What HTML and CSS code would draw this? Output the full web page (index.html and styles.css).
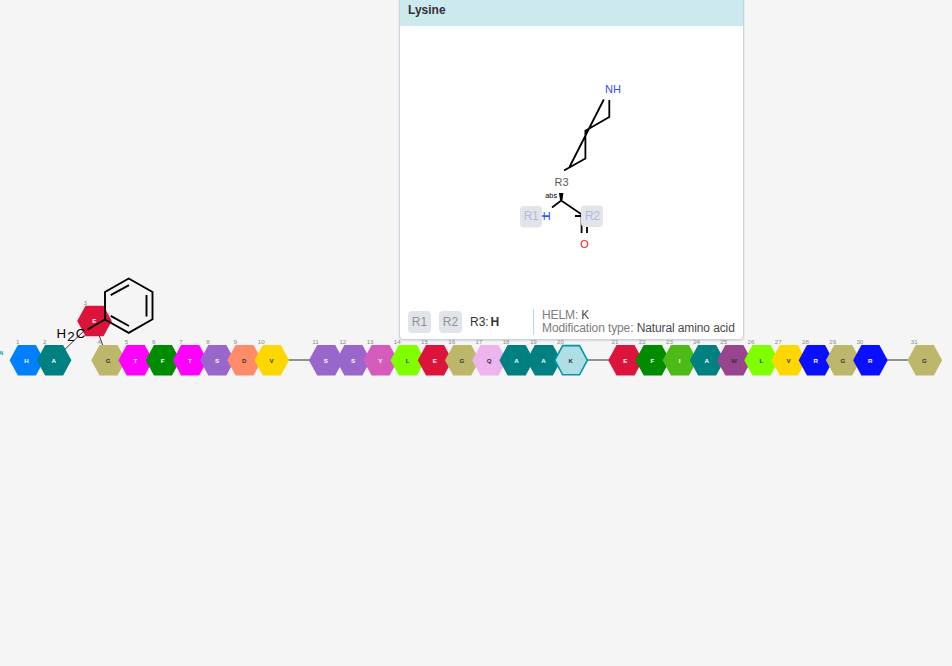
FILE: index.html
```html
<!DOCTYPE html>
<html lang="en">
<head>
<meta charset="utf-8">
<title>Sequence editor</title>
<link rel="stylesheet" href="styles.css">
</head>
<body>
<main class="editor">
  <svg class="canvas" width="952" height="666" viewBox="0 0 952 666">
    <text class="terminus" x="-0.700" y="355.300">N</text>
    <path class="bond" d="M288 360h24M587 360h24M886 360h24"/>
    <path class="bond thin" d="M54 360L94 321L108 360"/>
    <g id="monomers"></g>
    <g class="structure">
      <path d="M105 319.500V292L128.700 278.500L152.500 292V319.200L128.700 332.800L105 319.500L87.500 329.500M110.700 295.200L129 285.200M146.500 295V316.500M110.700 315.800L129 326"/>
      <text x="56.500" y="338.300">H</text>
      <text x="67.300" y="341.300">2</text>
      <text x="75.700" y="338.300">C</text>
    </g>
  </svg>
  <section class="card">
    <h1 class="card-title">Lysine</h1>
    <svg class="molecule" width="343" height="280" viewBox="400 26 343 280">
      <path class="atom-bond" d="M609.300 100V117L585.400 130.700V158.500L564 170.500M603.800 99.500L569.500 167M552 207.500L561.200 200.500L584 216M575 216H584M581.600 217V233M587 217V233"/>
      <path class="wedge" d="M559 193h4.400l-1 7.500h-2.300z"/>
      <text class="nitrogen" x="605" y="93">NH</text>
      <text class="group" x="554.500" y="186">R3</text>
      <text class="stereo" x="545.300" y="198">abs</text>
      <text class="nitrogen" x="542.800" y="220">H</text>
      <path class="nh-bond" d="M540 216h9"/>
      <text class="oxygen" x="580.200" y="248">O</text>
      <rect class="tag" x="520" y="206" width="22" height="21.500" rx="4"/>
      <rect class="tag" x="581" y="205.500" width="22" height="21.500" rx="4"/>
      <text class="tag-text" x="523.700" y="220">R1</text>
      <text class="tag-text" x="585" y="220">R2</text>
    </svg>
    <footer class="card-footer">
      <div class="groups">
        <span class="chip">R1</span>
        <span class="chip">R2</span>
        <span class="leaving">R3: <b>H</b></span>
      </div>
      <div class="facts">
        <div>HELM: <span>K</span></div>
        <div>Modification type: <span>Natural amino acid</span></div>
      </div>
    </footer>
  </section>
</main>
<script src="script.js"></script>
</body>
</html>
```
FILE: styles.css
```css
body {
  margin: 0;
  font-family: "Liberation Sans", Arial, sans-serif;
}

.editor {
  position: relative;
  width: 952px;
  height: 666px;
  overflow: hidden;
  background: #f5f5f5;
}

.canvas,
.molecule {
  display: block;
}

.terminus {
  font-size: 5.5px;
  font-weight: bold;
  fill: #22a0ad;
}

.bond {
  fill: none;
  stroke: #707070;
  stroke-width: 1.3;
}

.thin {
  stroke: #333;
  stroke-width: 1;
}

.letter {
  font-size: 6.2px;
  font-weight: bold;
  text-anchor: middle;
}

.number {
  font-size: 6.2px;
  fill: #8c8c8c;
}

.selected {
  stroke: #0097a8;
  stroke-width: 1.6;
}

.structure path {
  fill: none;
  stroke: #000;
  stroke-width: 1.9;
}

.structure text {
  font-size: 13.3px;
}

.card {
  position: absolute;
  top: -6px;
  left: 399px;
  box-sizing: border-box;
  width: 345px;
  height: 346px;
  overflow: hidden;
  border: 1px solid #cad3dd;
  border-radius: 4px;
  background: #fff;
  box-shadow: 0 1px 2px #67688433;
}

.card-title {
  height: 31px;
  margin: 0;
  padding-left: 8px;
  background: #cceaee;
  color: #333;
  font-size: 12px;
  line-height: 30px;
}

.atom-bond {
  fill: none;
  stroke: #000;
  stroke-width: 1.8;
}

.molecule text {
  font-size: 11px;
}

.nitrogen {
  fill: #304ff7;
}

.nh-bond {
  stroke: #304ff7;
  stroke-width: 1.5;
}

.oxygen {
  fill: #ff0d0d;
}

.group {
  fill: #585858;
}

.molecule .stereo {
  font-size: 7.3px;
}

.tag {
  fill: #e1e5ea;
}

.molecule .tag-text {
  font-size: 12px;
  letter-spacing: -0.3px;
  fill: #b4b8dc;
}

.card-footer {
  display: flex;
  align-items: center;
  height: 31px;
  padding: 0 8px;
  font-size: 12px;
}

.groups {
  display: flex;
  flex: none;
  align-items: center;
  gap: 8px;
  width: 125px;
}

.chip {
  width: 23px;
  border-radius: 4px;
  background: #e1e5ea;
  color: #8f9398;
  line-height: 22px;
  text-align: center;
}

.leaving {
  color: #333;
  word-spacing: -1.5px;
}

.facts {
  padding-left: 8px;
  border-left: 1px solid #cad3dd;
  color: #7c7c7c;
  letter-spacing: -0.11px;
  line-height: 13px;
  white-space: nowrap;
}

.facts span {
  color: #4a4a4a;
}
```
FILE: script.js
```js
const palette = {
  H: ["#0080ff", "#fff"],
  A: ["#008080", "#fff"],
  E: ["#dc143c", "#fff"],
  G: ["#bdb76b", "#333"],
  T: ["#ff00ff", "#fff"],
  F: ["#008b00", "#fff"],
  S: ["#9966cc", "#fff"],
  D: ["#ff8c69", "#333"],
  V: ["#ffd700", "#333"],
  Y: ["#d65cbc", "#fff"],
  L: ["#80ff00", "#333"],
  Q: ["#eeb4ee", "#333"],
  K: ["#afdfe5", "#333"],
  I: ["#4cbb17", "#fff"],
  W: ["#99458d", "#333"],
  R: ["#0a10ff", "#fff"]
};
const sequence = "HAEGTFTSDVSSYLEGQAAKEFIAWLVRGRG";
const pitch = 27.21;
const gapEvery = 10;

document.getElementById("monomers").innerHTML = [...sequence].map((code, i) => {
  const raised = i === 2;
  const x = raised ? 94.5 : 26.9 + pitch * (i + Math.floor(i / gapEvery));
  const y = raised ? 321 : 360.2;
  const [fill, ink] = palette[code];
  const selected = code === "K";
  const w = selected ? 16.3 : 17.3;
  const f = selected ? 8.4 : 9;
  const h = selected ? 14.6 : 15.2;
  const labelX = x - (i < 9 ? 11 : 14);
  return `<polygon ${selected ? 'class="selected" ' : ""}fill="${fill}" points="${x - w},${y} ${x - f},${y - h} ${x + f},${y - h} ${x + w},${y} ${x + f},${y + h} ${x - f},${y + h}"/>
    <text class="letter" fill="${ink}" x="${x - 0.3}" y="${y + 2.3}">${code}</text>
    <text class="number" x="${labelX}" y="${y - 16}">${i + 1}</text>`;
}).join("");
```
